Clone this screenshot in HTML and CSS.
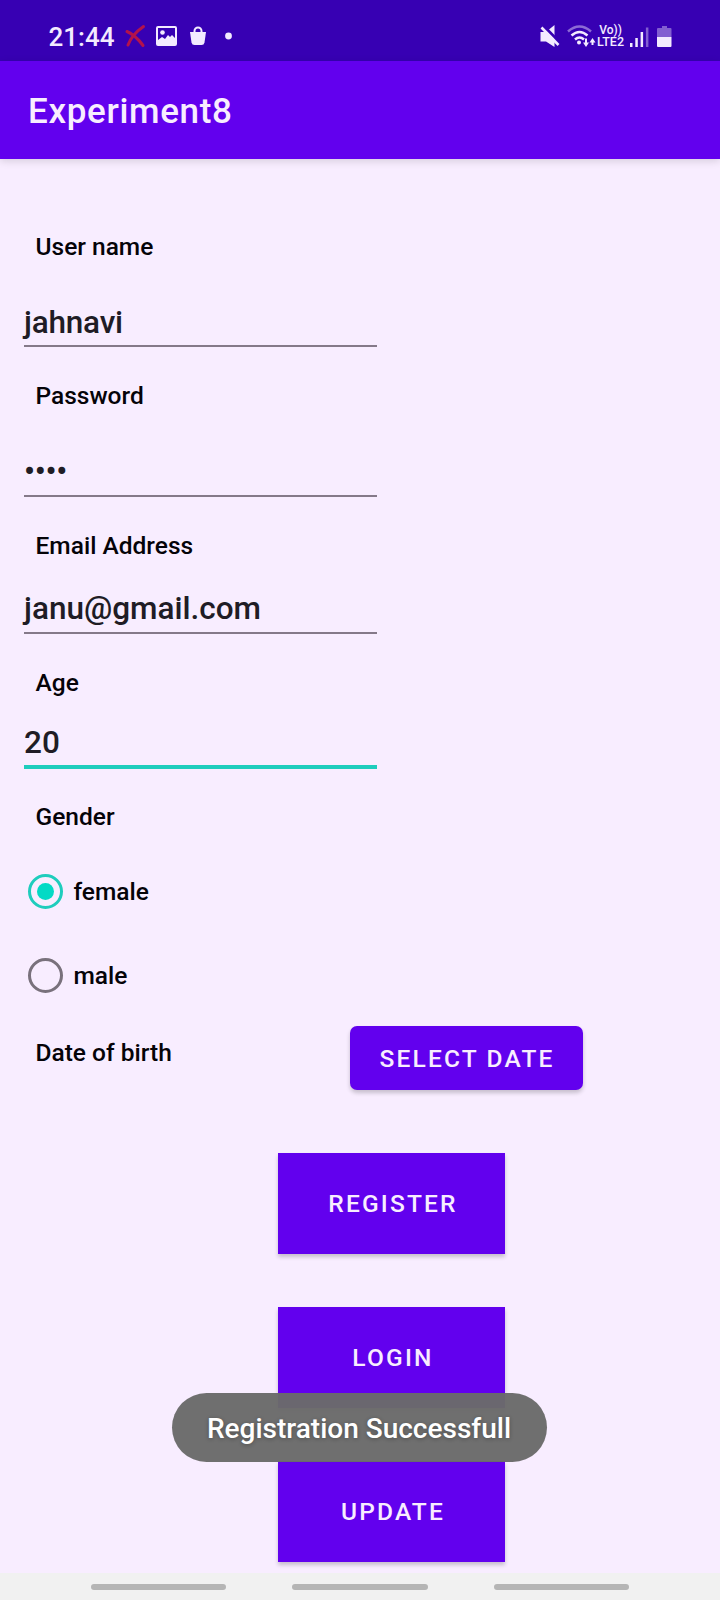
FILE: index.html
```html
<!DOCTYPE html>
<html lang="en">
<head>
<meta charset="utf-8">
<title>Experiment8</title>
<link rel="stylesheet" href="styles.css">
</head>
<body>
<div class="screen">
  <header class="status">
    <span class="time">21:44</span>
    <svg class="notifs" width="112" height="28" viewBox="0 0 112 28">
      <path d="M2 7.500C8 10 14 16 18 21.500M18.500 2.500C12 7 6 13 3 21" fill="none" stroke="#b3134b" stroke-width="3" stroke-linecap="round"/>
      <path fill="#f3eaff" fill-rule="evenodd" d="M33 2h17q2 0 2 2v16q0 2-2 2H33q-2 0-2-2V4q0-2 2-2zm0 2v12l4-3 3 2 3-4 2 2 2-2 3 3V4z"/>
      <circle cx="37.500" cy="8.500" r="2.300" fill="#f3eaff"/>
      <path fill="#f3eaff" d="M65 8h16l-1.500 10.500q-.5 2.500-3 2.500h-7q-2.500 0-3-2.500z"/>
      <path d="M69.500 9V7a3.500 3.500 0 0 1 7 0v2" fill="none" stroke="#f3eaff" stroke-width="2"/>
      <circle cx="103.500" cy="12" r="3.400" fill="#f3eaff"/>
    </svg>
    <div class="system">
      <svg width="57" height="28" viewBox="0 0 57 28">
        <path fill="#f3eaff" d="M.5 7H6l8.500-7v22L6 16.500H.5z"/>
        <path d="M3 .5L21 18.500" stroke="#3700b3" stroke-width="3"/>
        <path d="M1.500 2.500L18.500 20" stroke="#f3eaff" stroke-width="2.600"/>
        <g fill="none" stroke="#f3eaff" stroke-width="2.500">
          <path d="M28 6.500Q39.500-3.500 51 6.500" opacity=".45"/>
          <path d="M31.500 10.500Q39.500 3.500 47.500 10.500M35 14.500Q39.500 10.500 44 14.500"/>
        </g>
        <circle cx="39" cy="17.500" r="2" fill="#f3eaff"/>
        <path d="M46 13.500v6M52.500 20v-5" stroke="#f3eaff" stroke-width="2"/>
        <path d="M43 17.500h6L46 22zM49.500 17.500h6l-3-4.500z" fill="#f3eaff"/>
      </svg>
      <div class="lte"><span>Vo))</span><span>LTE2</span></div>
      <svg class="bars" width="44" height="28" viewBox="0 0 44 28">
        <g fill="#f3eaff">
          <rect x="0" y="18" width="2.500" height="4"/>
          <rect x="5.300" y="13" width="2.500" height="9"/>
          <rect x="10.600" y="7" width="2.500" height="15"/>
          <rect x="15.900" y="2.500" width="2.500" height="19.500" opacity=".4"/>
          <path d="M32 1h5v2h3.500q1 0 1 1v8H27V4q0-1 1-1h4z" opacity=".4"/>
          <path d="M27 12h14.500v9q0 1-1 1H28q-1 0-1-1z"/>
        </g>
      </svg>
    </div>
  </header>
  <div class="appbar">Experiment8</div>

  <main class="form">
    <div class="field user"><label>User name</label><div class="input">jahnavi</div></div>
    <div class="field password"><label>Password</label><div class="input">••••</div></div>
    <div class="field email"><label>Email Address</label><div class="input">janu@gmail.com</div></div>
    <div class="field age"><label>Age</label><div class="input focused">20</div></div>
    <div class="gender">Gender</div>
    <div class="option"><span class="radio checked"></span><span class="option-label">female</span></div>
    <div class="option"><span class="radio"></span><span class="option-label">male</span></div>
    <div class="birth"><span class="birth-label">Date of birth</span><div class="btn date">SELECT DATE</div></div>
    <div class="actions">
      <div class="btn">REGISTER</div>
      <div class="btn">LOGIN</div>
      <div class="btn">UPDATE</div>
    </div>
  </main>

  <nav class="navbar"><i></i><i></i><i></i></nav>
  <div class="toast">Registration Successfull</div>
</div>
</body>
</html>
```
FILE: styles.css
```css
* { box-sizing: border-box; }
body {
  margin: 0;
  font-family: Roboto, sans-serif;
  font-weight: 500;
  font-size: 24.5px;
  line-height: 30px;
  color: #050308;
}
.screen {
  position: relative;
  display: flex;
  flex-direction: column;
  width: 720px;
  height: 1600px;
  overflow: hidden;
  background: #f8edff;
}
.status {
  display: flex;
  flex: none;
  height: 60.5px;
  padding: 0 46px 0 48.5px;
  background: #3700b3;
  color: #f3eaff;
}
.time { width: 76.5px; padding-top: 22px; font-size: 26px; white-space: nowrap; }
.notifs { margin-top: 24px; }
.system { display: flex; margin: 24.5px 0 0 auto; }
.lte {
  display: flex;
  flex-direction: column;
  align-items: center;
  width: 28px;
  font-size: 12.5px;
  line-height: 11.5px;
  white-space: nowrap;
}
.lte span:first-child { font-size: 12px; }
.bars { margin-left: 5.5px; }
.appbar {
  flex: none;
  height: 98px;
  padding: 29px 0 0 28px;
  background: #6200ee;
  color: #f8edff;
  font-size: 35px;
  line-height: 44px;
  letter-spacing: .65px;
  box-shadow: 0 2px 8px rgba(0, 0, 0, .14);
}
.form { flex: 1; padding-top: 73.5px; }
.field { display: flex; flex-direction: column; padding-left: 24px; }
.field label { padding-left: 11.5px; }
.input {
  width: 353px;
  height: 43px;
  border-bottom: 2px solid #857989;
  font-size: 31.5px;
  line-height: 38px;
  color: #201c25;
}
.user { height: 149px; gap: 42px; }
.user .input { letter-spacing: -.2px; }
.password { height: 150px; gap: 42px; }
.password .input { height: 44px; letter-spacing: -.3px; }
.email { height: 137px; gap: 29px; }
.email .input { height: 44px; }
.age { height: 134px; gap: 26px; }
.input.focused { height: 45px; border-bottom: 4px solid #1fcdbd; }
.gender { height: 47px; padding-left: 35.5px; }
.option { display: flex; align-items: center; gap: 10.5px; height: 84px; padding-left: 28px; }
.option-label { padding-top: 2px; }
.radio { display: grid; place-items: center; width: 35px; height: 35px; border: 3.5px solid #79717c; border-radius: 50%; }
.radio.checked { border-color: #1fcdbd; }
.radio.checked::after { content: ""; width: 17px; height: 17px; border-radius: 50%; background: #03dac5; }
.birth { display: flex; align-items: flex-start; height: 136px; padding: 9px 0 0 35px; }
.birth-label { width: 315px; padding: 12px 0 0 .5px; }
.btn {
  display: grid;
  place-items: center;
  width: 227px;
  height: 101px;
  padding: 1px 0 0 3px;
  background: #6200ee;
  color: #f8edff;
  letter-spacing: .0893em;
  box-shadow: 0 3px 4px rgba(0, 0, 0, .2);
}
.btn.date { width: 233px; height: 64px; padding-left: 1px; border-radius: 7px; }
.actions { display: flex; flex-direction: column; gap: 53px; padding-left: 278px; }
.navbar {
  display: flex;
  flex: none;
  justify-content: center;
  gap: 66px;
  height: 27px;
  padding-top: 11px;
  background: #f1f1f1;
}
.navbar i { width: 135.5px; height: 6px; border-radius: 3px; background: #b5b5b5; }
.toast {
  position: absolute;
  left: 172px;
  top: 1393px;
  display: grid;
  place-items: center;
  width: 375px;
  height: 69px;
  padding: 3px 1px 0 0;
  border-radius: 35px;
  background: rgba(106, 106, 106, .97);
  color: #fff;
  font-size: 28px;
  text-shadow: 0 1px 4px rgba(0, 0, 0, .3);
}
```
